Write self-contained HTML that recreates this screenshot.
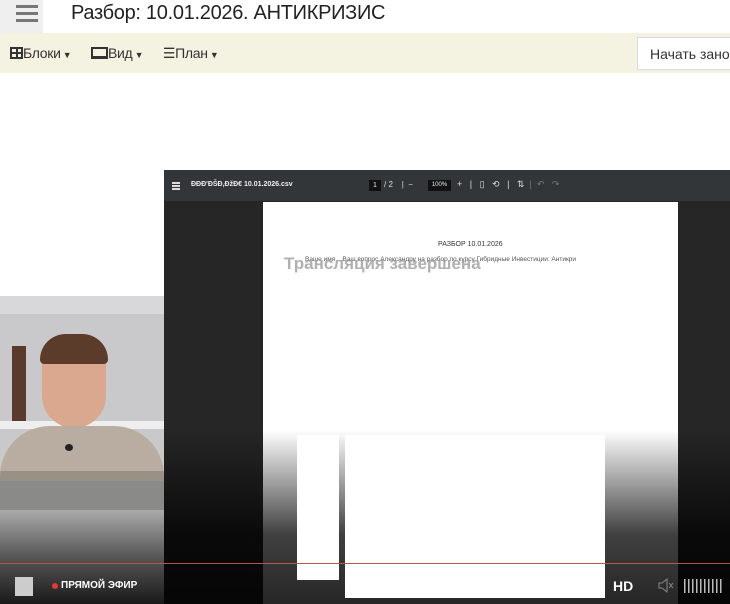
<!DOCTYPE html>
<html><head><meta charset="utf-8"><style>
*{margin:0;padding:0;box-sizing:border-box}
body{width:730px;height:604px;overflow:hidden;background:#fff;font-family:"Liberation Sans",sans-serif;position:relative}
.a{position:absolute}
</style></head><body>
<div class="a" style="left:0;top:0;width:43px;height:33px;background:#efefef"></div>
<div class="a" style="left:16px;top:5px;width:22px;height:3px;background:#777;box-shadow:0 7px 0 #777,0 14px 0 #777"></div>
<div class="a" style="left:71px;top:2px;font-size:20px;color:#222;letter-spacing:-0.3px">Разбор: 10.01.2026. АНТИКРИЗИС</div>
<div class="a" style="left:0;top:33px;width:730px;height:40px;background:#f4f2e0"></div>
<div class="a" style="left:10px;top:45px;font-size:14px;color:#333;white-space:nowrap;letter-spacing:-0.3px">
<span style="display:inline-block;width:13px;height:12px;border:2px solid #333;vertical-align:-1px;background:linear-gradient(#333,#333) 50% 0/2px 100% no-repeat,linear-gradient(#333,#333) 0 50%/100% 2px no-repeat"></span>Блоки<span style="font-size:9px"> ▼</span>
<span style="display:inline-block;width:17px;height:12px;border:2px solid #333;border-bottom-width:3px;margin-left:16px;vertical-align:-1px"></span>Вид<span style="font-size:9px"> ▼</span>
<span style="margin-left:16px">☰</span>План<span style="font-size:9px"> ▼</span></div>
<div class="a" style="left:637px;top:37px;width:100px;height:33px;border:1px solid #ddd;background:#fff;font-size:14px;color:#333;padding:8px 12px;white-space:nowrap">Начать заново</div>
<!-- player -->
<div class="a" style="left:0;top:296px;width:164px;height:308px;background:linear-gradient(#fff 0,#fff 214px,#aaa 214px,#555 262px,#1a1a1a 308px)"></div>
<div class="a" style="left:0;top:296px;width:164px;height:214px;background:#c9c9cb;overflow:hidden">
 <div class="a" style="left:0;top:0;width:164px;height:18px;background:#d8d8da"></div>
 <div class="a" style="left:12px;top:50px;width:14px;height:75px;background:#5a3a2a"></div>
 <div class="a" style="left:0;top:125px;width:164px;height:8px;background:#eee"></div>
 <div class="a" style="left:42px;top:42px;width:64px;height:90px;background:#d9a88e;border-radius:30px 30px 35px 35px"></div>
 <div class="a" style="left:40px;top:38px;width:68px;height:30px;background:#5b3b2a;border-radius:30px 30px 5px 5px"></div>
 <div class="a" style="left:0;top:130px;width:164px;height:84px;background:linear-gradient(#b8ada0 0,#b8ada0 45px,#9a9186 45px,#9a9186 55px,#8a8a88 55px);border-radius:50px 50px 0 0"></div>
 <div class="a" style="left:65px;top:148px;width:8px;height:7px;border-radius:50%;background:#222"></div>
</div>
<div class="a" style="left:164px;top:170px;width:566px;height:434px;background:#262626"></div>
<div class="a" style="left:164px;top:170px;width:566px;height:31px;background:#333639"></div>
<div class="a" style="left:172px;top:182px;width:8px;height:1.5px;background:#ddd;box-shadow:0 3px 0 #ddd,0 6px 0 #ddd"></div>
<div class="a" style="left:191px;top:181px;font-size:7px;font-weight:bold;color:#eee">ĐĐĐ'ĐŠĐ,ĐžĐ€ 10.01.2026.csv</div>
<div class="a" style="left:369px;top:180px;width:12px;height:11px;background:#111;color:#eee;font-size:7px;text-align:center;line-height:11px">1</div>
<div class="a" style="left:384px;top:180px;font-size:8px;color:#ddd;white-space:pre">/ 2    |  −</div>
<div class="a" style="left:428px;top:180px;width:23px;height:11px;background:#111;color:#eee;font-size:6px;text-align:center;line-height:11px">100%</div>
<div class="a" style="left:457px;top:179px;font-size:9px;color:#ddd;white-space:pre">+   |   ▯   ⟲   |   ⇅  <span style="color:#777">|  ↶   ↷</span></div>
<div class="a" style="left:263px;top:202px;width:415px;height:402px;background:#fff"></div>
<div class="a" style="left:438px;top:241px;font-size:7px;color:#333">РАЗБОР 10.01.2026</div>
<div class="a" style="left:305px;top:256px;font-size:6.5px;color:#555">Ваше имя &nbsp;&nbsp; Ваш вопрос Александру на разбор по курсу Гибридные Инвестиции: Антикри</div>
<div class="a" style="left:284px;top:254px;font-size:17px;font-weight:bold;color:rgba(150,150,150,.75)">Трансляция завершена</div>
<div class="a" style="left:164px;top:430px;width:566px;height:174px;background:linear-gradient(rgba(0,0,0,0),rgba(0,0,0,.75) 60%,rgba(0,0,0,.85))"></div>
<div class="a" style="left:297px;top:435px;width:42px;height:145px;background:#fff"></div>
<div class="a" style="left:345px;top:435px;width:260px;height:163px;background:#fff"></div>
<div class="a" style="left:0;top:563px;width:730px;height:1px;background:#c0504a"></div>
<div class="a" style="left:15px;top:577px;width:18px;height:19px;background:#ccc"></div>
<div class="a" style="left:52px;top:583px;width:6px;height:6px;border-radius:50%;background:#e53935"></div>
<div class="a" style="left:61px;top:580px;font-size:10px;font-weight:bold;color:#fff">ПРЯМОЙ ЭФИР</div>
<div class="a" style="left:613px;top:578px;font-size:14px;font-weight:bold;color:#fff">HD</div>
<svg class="a" style="left:657px;top:577px" width="18" height="17" viewBox="0 0 18 17"><path d="M2 6h3l5-4v13l-5-4H2z M12 6l4 5 M16 6l-4 5" fill="none" stroke="#888" stroke-width="1"/></svg>
<div class="a" style="left:684px;top:579px;width:40px;height:14px;background:repeating-linear-gradient(90deg,#bbb 0 1.5px,transparent 1.5px 4px)"></div>
</body></html>
